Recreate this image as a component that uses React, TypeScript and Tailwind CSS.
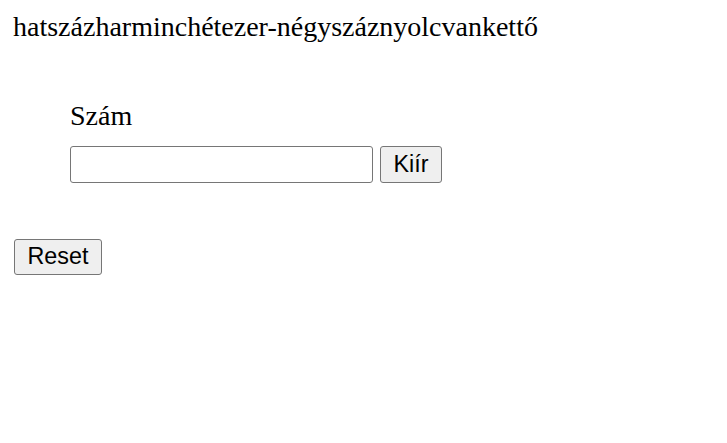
export default function App() {
  return (
    <div
      className="min-h-[443px] bg-white pl-[13px] pt-[11px] text-black"
      style={{ fontFamily: '"Liberation Serif", "Times New Roman", serif' }}
    >
      <div className="text-[28px] leading-[32px]">hatszázharminchétezer-négyszáznyolcvankettő</div>
      <div className="ml-[57px] mt-[57px] flex flex-col">
        <label className="text-[28px] leading-[32px]">Szám</label>
        <div className="mt-[14px] flex gap-[7px]">
          <input
            type="text"
            className="h-[37px] w-[303px] rounded-[3px] border border-[#767676] bg-white px-1 text-[23px] outline-none"
            style={{ fontFamily: '"Liberation Sans", Arial, sans-serif' }}
          />
          <button
            className="flex h-[37px] w-[62px] items-center justify-center rounded-[3px] border border-[#767676] bg-[#efefef] text-[23.33px] leading-none"
            style={{ fontFamily: '"Liberation Sans", Arial, sans-serif' }}
          >
            Kiír
          </button>
        </div>
      </div>
      <button
        className="ml-[1px] mt-[56px] flex h-[36px] w-[88px] items-center justify-center rounded-[3px] border border-[#767676] bg-[#efefef] text-[23.33px] leading-none"
        style={{ fontFamily: '"Liberation Sans", Arial, sans-serif' }}
      >
        Reset
      </button>
    </div>
  );
}
